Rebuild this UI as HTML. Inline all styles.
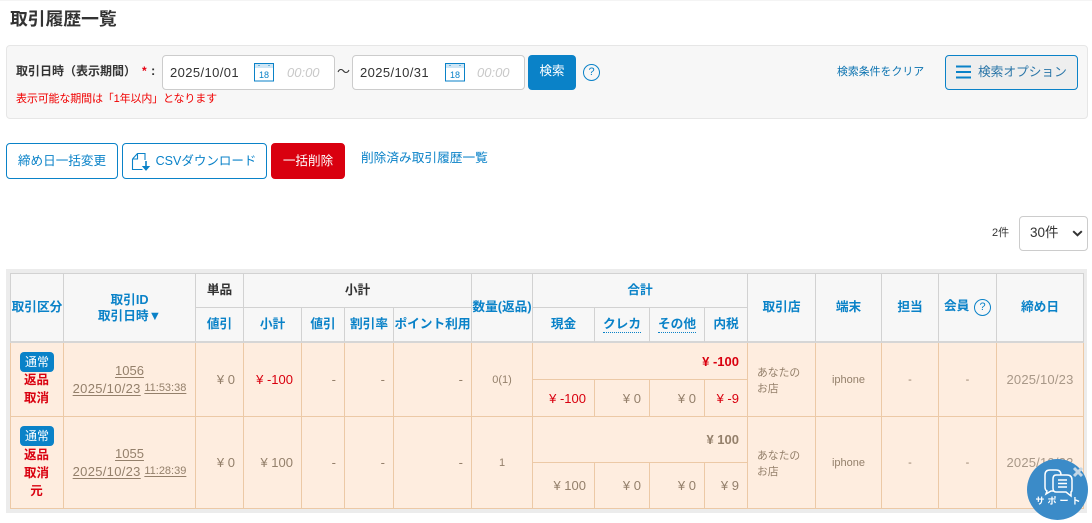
<!DOCTYPE html>
<html lang="ja">
<head>
<meta charset="utf-8">
<title>取引履歴一覧</title>
<style>
*{box-sizing:border-box}
html,body{margin:0;padding:0;width:1092px;height:523px;overflow:hidden;background:#fff}
body{position:relative;font-family:"Liberation Sans","Noto Sans CJK JP",sans-serif;font-size:12px;color:#333}
.a{position:absolute;white-space:nowrap}
.r{position:absolute;display:block}
.h,.hk{position:absolute;display:flex;align-items:center;justify-content:center;text-align:center;font-size:12.7px !important;font-weight:bold;line-height:17px;color:#0a82c8;white-space:nowrap}
.hk{color:#333}
.v{position:absolute;display:flex;align-items:center;justify-content:flex-end;font-size:13px;color:#94806b;white-space:nowrap}
.c{justify-content:center}
.red{color:#d9000f}
.inp{position:absolute;top:55px;width:173px;height:35px;background:#fff;border:1px solid #ccc;border-radius:4px}
.btn{position:absolute;top:143px;height:36px;padding-bottom:3px;border:1px solid #0a82c8;border-radius:4px;background:#fff;color:#0a82c8;font-size:12.6px;display:flex;align-items:center;justify-content:center;white-space:nowrap}
.tag{position:absolute;left:20px;width:34px;height:20px;background:#0a82c8;color:#fff;border-radius:4px;font-size:12px;line-height:20px;text-align:center}
.rt{position:absolute;width:53px;left:10px;text-align:center;color:#d9000f;font-weight:bold;font-size:12.5px;line-height:17px}
.q{position:absolute;border:1px solid #0a82c8;border-radius:50%;color:#0a82c8;width:17px;height:17px;text-align:center;line-height:15px;font-size:11px;background:#fff0}
.dt{font-size:13px;letter-spacing:.4px;line-height:17px;color:#333}
u{text-underline-offset:2px}
</style>
</head>
<body>
<div class="r" style="left:0;top:0;width:1092px;height:1px;background:#f4f4f4"></div>
<div class="a" style="left:10px;top:8px;font-size:17.8px;font-weight:bold;line-height:22px;color:#333">取引履歴一覧</div>

<!-- search panel -->
<div class="r" style="left:6px;top:45px;width:1082px;height:74px;background:#f7f7f7;border:1px solid #e6e6e6;border-radius:4px"></div>
<div class="a" style="left:16px;top:62px;font-size:12px;font-weight:bold;line-height:18px;color:#333">取引日時（表示期間）</div>
<div class="a" style="left:142px;top:62px;font-size:12px;font-weight:bold;line-height:18px;color:#e60012">*</div>
<div class="a" style="left:151px;top:62px;font-size:13px;font-weight:bold;line-height:18px;color:#333">:</div>
<div class="a" style="left:16px;top:91px;font-size:11px;letter-spacing:-.15px;line-height:16px;color:#f00000">表示可能な期間は「1年以内」となります</div>

<div class="inp" style="left:162px"></div>
<div class="a dt" style="left:170px;top:64px">2025/10/01</div>
<svg class="r" style="left:254px;top:63px" width="20" height="19" viewBox="0 0 20 19"><rect x=".5" y=".5" width="19" height="17.5" fill="#fff" stroke="#0a82c8"/><rect x="1" y="1" width="18" height="4" fill="#cfe6f5"/><path d="M5 2v1M15 2v1" stroke="#0a82c8"/><text x="10" y="15" text-anchor="middle" font-size="9" font-family="Liberation Sans" fill="#0a82c8">18</text></svg>
<div class="a" style="left:287px;top:64px;font-size:13px;font-style:italic;line-height:17px;color:#c9c9c9">00:00</div>

<div class="a" style="left:337px;top:63px;font-size:13px;line-height:18px;color:#333">〜</div>

<div class="inp" style="left:352px"></div>
<div class="a dt" style="left:360px;top:64px">2025/10/31</div>
<svg class="r" style="left:445px;top:63px" width="20" height="19" viewBox="0 0 20 19"><rect x=".5" y=".5" width="19" height="17.5" fill="#fff" stroke="#0a82c8"/><rect x="1" y="1" width="18" height="4" fill="#cfe6f5"/><path d="M5 2v1M15 2v1" stroke="#0a82c8"/><text x="10" y="15" text-anchor="middle" font-size="9" font-family="Liberation Sans" fill="#0a82c8">18</text></svg>
<div class="a" style="left:477px;top:64px;font-size:13px;font-style:italic;line-height:17px;color:#c9c9c9">00:00</div>

<div class="a" style="left:528px;top:55px;width:48px;height:35px;background:#0a82c8;border-radius:4px;color:#fff;font-size:12.5px;line-height:33px;text-align:center">検索</div>
<div class="q" style="left:583px;top:64px">?</div>
<div class="a" style="left:837px;top:64px;font-size:10.9px;line-height:17px;color:#0a72b0">検索条件をクリア</div>
<div class="a" style="left:945px;top:55px;width:133px;height:35px;background:#eee;border:1px solid #0a82c8;border-radius:4px"></div>
<svg class="r" style="left:956px;top:65px" width="16" height="14" viewBox="0 0 16 14"><path d="M0 1.5h15M0 7h15M0 12.5h15" stroke="#0a82c8" stroke-width="2"/></svg>
<div class="a" style="left:978px;top:63px;font-size:12.7px;line-height:18px;color:#2b76a8">検索オプション</div>

<!-- action buttons -->
<div class="btn" style="left:6px;width:112px">締め日一括変更</div>
<div class="btn" style="left:122px;width:145px;padding-left:23px;font-size:12.5px">CSVダウンロード</div>
<svg class="r" style="left:131px;top:152px" width="20" height="19" viewBox="0 0 20 19" fill="none" stroke="#0a82c8" stroke-width="1.1"><path d="M1.5 7 6.5 1.5h7.5v6.5M1.5 7v10.5h10"/><path d="M6.5 1.5V7H1.5"/><path d="M15 9v7" stroke-width="1.6"/><path d="M12 14.5h6l-3 3.5z" fill="#0a82c8"/></svg>
<div class="btn" style="left:271px;width:74px;background:#d9000f;border-color:#d9000f;color:#fff">一括削除</div>
<div class="a" style="left:361px;top:150px;font-size:12.7px;line-height:17px;color:#0a82c8">削除済み取引履歴一覧</div>

<div class="a" style="left:992px;top:225px;font-size:11px;line-height:16px;color:#333">2件</div>
<div class="r" style="left:1019px;top:216px;width:69px;height:35px;border:1px solid #ccc;border-radius:4px;background:#fff"></div>
<div class="a" style="left:1030px;top:224px;font-size:13.5px;line-height:18px;color:#333">30件</div>
<svg class="r" style="left:1072px;top:230px" width="11" height="7" viewBox="0 0 11 7"><path d="M1.2 1.2 5.5 5.2 9.8 1.2" fill="none" stroke="#333" stroke-width="2"/></svg>

<!-- table backgrounds -->
<div class="r" style="left:6px;top:269px;width:1081px;height:244px;background:#ececec"></div>
<div class="r" style="left:10px;top:273px;width:1074px;height:70px;background:#f7f7f7"></div>
<div class="r" style="left:10px;top:343px;width:1074px;height:166px;background:#feeddf"></div>

<!-- header lines -->
<div class="r" style="left:10px;top:273px;width:1074px;height:1px;background:#d2d2d2"></div>
<div class="r" style="left:10px;top:341px;width:1074px;height:2px;background:#d6d6d6"></div>
<div class="r" style="left:195px;top:307px;width:276px;height:1px;background:#d2d2d2"></div>
<div class="r" style="left:532px;top:307px;width:215px;height:1px;background:#d2d2d2"></div>
<!-- header verticals -->
<div class="r" style="left:10px;top:273px;width:1px;height:69px;background:#d2d2d2"></div>
<div class="r" style="left:63px;top:273px;width:1px;height:69px;background:#d2d2d2"></div>
<div class="r" style="left:195px;top:273px;width:1px;height:69px;background:#d2d2d2"></div>
<div class="r" style="left:243px;top:273px;width:1px;height:69px;background:#d2d2d2"></div>
<div class="r" style="left:301px;top:307px;width:1px;height:35px;background:#d2d2d2"></div>
<div class="r" style="left:344px;top:307px;width:1px;height:35px;background:#d2d2d2"></div>
<div class="r" style="left:393px;top:307px;width:1px;height:35px;background:#d2d2d2"></div>
<div class="r" style="left:471px;top:273px;width:1px;height:69px;background:#d2d2d2"></div>
<div class="r" style="left:532px;top:273px;width:1px;height:69px;background:#d2d2d2"></div>
<div class="r" style="left:594px;top:307px;width:1px;height:35px;background:#d2d2d2"></div>
<div class="r" style="left:649px;top:307px;width:1px;height:35px;background:#d2d2d2"></div>
<div class="r" style="left:704px;top:307px;width:1px;height:35px;background:#d2d2d2"></div>
<div class="r" style="left:747px;top:273px;width:1px;height:69px;background:#d2d2d2"></div>
<div class="r" style="left:815px;top:273px;width:1px;height:69px;background:#d2d2d2"></div>
<div class="r" style="left:881px;top:273px;width:1px;height:69px;background:#d2d2d2"></div>
<div class="r" style="left:938px;top:273px;width:1px;height:69px;background:#d2d2d2"></div>
<div class="r" style="left:996px;top:273px;width:1px;height:69px;background:#d2d2d2"></div>
<div class="r" style="left:1083px;top:273px;width:1px;height:69px;background:#d2d2d2"></div>

<!-- body lines -->
<div class="r" style="left:10px;top:416px;width:1074px;height:1px;background:#ecc9a6"></div>
<div class="r" style="left:10px;top:508px;width:1074px;height:1px;background:#ecc9a6"></div>
<div class="r" style="left:532px;top:379px;width:215px;height:1px;background:#ecc9a6"></div>
<div class="r" style="left:532px;top:462px;width:215px;height:1px;background:#ecc9a6"></div>
<div class="r" style="left:10px;top:343px;width:1px;height:166px;background:#ecc9a6"></div>
<div class="r" style="left:63px;top:343px;width:1px;height:166px;background:#ecc9a6"></div>
<div class="r" style="left:195px;top:343px;width:1px;height:166px;background:#ecc9a6"></div>
<div class="r" style="left:243px;top:343px;width:1px;height:166px;background:#ecc9a6"></div>
<div class="r" style="left:301px;top:343px;width:1px;height:166px;background:#ecc9a6"></div>
<div class="r" style="left:344px;top:343px;width:1px;height:166px;background:#ecc9a6"></div>
<div class="r" style="left:393px;top:343px;width:1px;height:166px;background:#ecc9a6"></div>
<div class="r" style="left:471px;top:343px;width:1px;height:166px;background:#ecc9a6"></div>
<div class="r" style="left:532px;top:343px;width:1px;height:166px;background:#ecc9a6"></div>
<div class="r" style="left:594px;top:380px;width:1px;height:36px;background:#ecc9a6"></div>
<div class="r" style="left:649px;top:380px;width:1px;height:36px;background:#ecc9a6"></div>
<div class="r" style="left:704px;top:380px;width:1px;height:36px;background:#ecc9a6"></div>
<div class="r" style="left:594px;top:463px;width:1px;height:45px;background:#ecc9a6"></div>
<div class="r" style="left:649px;top:463px;width:1px;height:45px;background:#ecc9a6"></div>
<div class="r" style="left:704px;top:463px;width:1px;height:45px;background:#ecc9a6"></div>
<div class="r" style="left:747px;top:343px;width:1px;height:166px;background:#ecc9a6"></div>
<div class="r" style="left:815px;top:343px;width:1px;height:166px;background:#ecc9a6"></div>
<div class="r" style="left:881px;top:343px;width:1px;height:166px;background:#ecc9a6"></div>
<div class="r" style="left:938px;top:343px;width:1px;height:166px;background:#ecc9a6"></div>
<div class="r" style="left:996px;top:343px;width:1px;height:166px;background:#ecc9a6"></div>
<div class="r" style="left:1083px;top:343px;width:1px;height:166px;background:#ecc9a6"></div>

<!-- header text -->
<div class="h" style="left:11px;top:274px;width:52px;height:67px">取引区分</div>
<div class="h" style="left:64px;top:274px;width:131px;height:67px;line-height:16px">取引ID<br>取引日時▼</div>
<div class="hk" style="left:196px;top:274px;width:47px;height:33px">単品</div>
<div class="h" style="left:196px;top:308px;width:47px;height:33px">値引</div>
<div class="hk" style="left:244px;top:274px;width:227px;height:33px">小計</div>
<div class="h" style="left:244px;top:308px;width:57px;height:33px">小計</div>
<div class="h" style="left:302px;top:308px;width:42px;height:33px">値引</div>
<div class="h" style="left:345px;top:308px;width:48px;height:33px">割引率</div>
<div class="h" style="left:394px;top:308px;width:77px;height:33px">ポイント利用</div>
<div class="h" style="left:472px;top:274px;width:60px;height:67px">数量(返品)</div>
<div class="h" style="left:533px;top:274px;width:214px;height:33px">合計</div>
<div class="h" style="left:533px;top:308px;width:61px;height:33px">現金</div>
<div class="h" style="left:595px;top:308px;width:54px;height:33px"><span style="border-bottom:1px dotted #0a82c8;line-height:15px">クレカ</span></div>
<div class="h" style="left:650px;top:308px;width:54px;height:33px"><span style="border-bottom:1px dotted #0a82c8;line-height:15px">その他</span></div>
<div class="h" style="left:705px;top:308px;width:42px;height:33px">内税</div>
<div class="h" style="left:748px;top:274px;width:67px;height:67px">取引店</div>
<div class="h" style="left:816px;top:274px;width:65px;height:67px">端末</div>
<div class="h" style="left:882px;top:274px;width:56px;height:67px">担当</div>
<div class="h" style="left:944px;top:298px;height:17px">会員</div>
<div class="q" style="left:974px;top:299px">?</div>
<div class="h" style="left:997px;top:274px;width:86px;height:67px">締め日</div>

<!-- row 1 -->
<div class="tag" style="top:352px">通常</div>
<div class="rt" style="top:372px;line-height:17.5px">返品<br>取消</div>
<div class="v c" style="left:64px;top:361px;width:131px;height:18px;font-size:13px"><u>1056</u></div>
<div class="v c" style="left:64px;top:379px;width:131px;height:18px;font-size:13px"><u style="letter-spacing:.3px">2025/10/23</u>&nbsp;<u style="font-size:11px">11:53:38</u></div>
<div class="v" style="left:196px;top:343px;width:39px;height:73px">¥ 0</div>
<div class="v red" style="left:244px;top:343px;width:49px;height:73px">¥ -100</div>
<div class="v" style="left:302px;top:343px;width:34px;height:73px">-</div>
<div class="v" style="left:345px;top:343px;width:40px;height:73px">-</div>
<div class="v" style="left:394px;top:343px;width:69px;height:73px">-</div>
<div class="v c" style="left:472px;top:343px;width:60px;height:74px;font-size:11px">0(1)</div>
<div class="v red" style="left:533px;top:343px;width:206px;height:36px;font-weight:bold">¥ -100</div>
<div class="v red" style="left:533px;top:380px;width:53px;height:36px">¥ -100</div>
<div class="v" style="left:595px;top:380px;width:46px;height:36px">¥ 0</div>
<div class="v" style="left:650px;top:380px;width:46px;height:36px">¥ 0</div>
<div class="v red" style="left:705px;top:380px;width:34px;height:36px">¥ -9</div>
<div class="a" style="left:757px;top:366px;font-size:10.8px;line-height:15.5px;color:#94806b">あなたの<br>お店</div>
<div class="v c" style="left:816px;top:343px;width:65px;height:74px;font-size:11px">iphone</div>
<div class="v c" style="left:882px;top:343px;width:56px;height:74px;font-size:11px">-</div>
<div class="v c" style="left:939px;top:343px;width:57px;height:74px;font-size:11px">-</div>
<div class="v c" style="left:997px;top:343px;width:86px;height:73px;font-size:13px;letter-spacing:.2px;color:#a89888">2025/10/23</div>

<!-- row 2 -->
<div class="tag" style="top:426px">通常</div>
<div class="rt" style="top:446px;line-height:18px">返品<br>取消<br>元</div>
<div class="v c" style="left:64px;top:444px;width:131px;height:18px;font-size:13px"><u>1055</u></div>
<div class="v c" style="left:64px;top:462px;width:131px;height:18px;font-size:13px"><u style="letter-spacing:.3px">2025/10/23</u>&nbsp;<u style="font-size:11px">11:28:39</u></div>
<div class="v" style="left:196px;top:417px;width:39px;height:91px">¥ 0</div>
<div class="v" style="left:244px;top:417px;width:49px;height:91px">¥ 100</div>
<div class="v" style="left:302px;top:417px;width:34px;height:91px">-</div>
<div class="v" style="left:345px;top:417px;width:40px;height:91px">-</div>
<div class="v" style="left:394px;top:417px;width:69px;height:91px">-</div>
<div class="v c" style="left:472px;top:417px;width:60px;height:92px;font-size:11px">1</div>
<div class="v" style="left:533px;top:417px;width:206px;height:45px;font-weight:bold">¥ 100</div>
<div class="v" style="left:533px;top:463px;width:53px;height:45px">¥ 100</div>
<div class="v" style="left:595px;top:463px;width:46px;height:45px">¥ 0</div>
<div class="v" style="left:650px;top:463px;width:46px;height:45px">¥ 0</div>
<div class="v" style="left:705px;top:463px;width:34px;height:45px">¥ 9</div>
<div class="a" style="left:757px;top:449px;font-size:10.8px;line-height:15.5px;color:#94806b">あなたの<br>お店</div>
<div class="v c" style="left:816px;top:417px;width:65px;height:92px;font-size:11px">iphone</div>
<div class="v c" style="left:882px;top:417px;width:56px;height:92px;font-size:11px">-</div>
<div class="v c" style="left:939px;top:417px;width:57px;height:92px;font-size:11px">-</div>
<div class="v c" style="left:997px;top:417px;width:86px;height:91px;font-size:13px;letter-spacing:.2px;color:#a89888">2025/10/23</div>

<!-- support bubble -->
<div class="r" style="left:1027px;top:459px;width:61px;height:61px;border-radius:50%;background:#3b8bc8"></div>
<svg class="r" style="left:1027px;top:459px" width="65" height="61" viewBox="0 0 65 61" fill="none"><path d="M34 17v-1q0-5-5-5H23q-5 0-5 5v12q0 3 2 4l-1 3 5-3h3" stroke="#fff" stroke-width="1.5"/><path d="M29 16h11q5 0 5 5v9q0 3-1 3v4l-5-4H29q-3 0-3-4v-9q0-4 3-4z" fill="#3b8bc8" stroke="#fff" stroke-width="1.5"/><path d="M31 21h9M31 24.5h9M31 28h9" stroke="#fff" stroke-width="1.4"/><path d="M47 9l8 8M55 9l-8 8" stroke="#c3d6e6" stroke-width="3"/></svg>
<div class="a" style="left:1029px;top:494px;width:61px;text-align:center;color:#fff;font-size:9px;font-weight:bold;letter-spacing:3px;line-height:14px">サポート</div>
</body>
</html>
